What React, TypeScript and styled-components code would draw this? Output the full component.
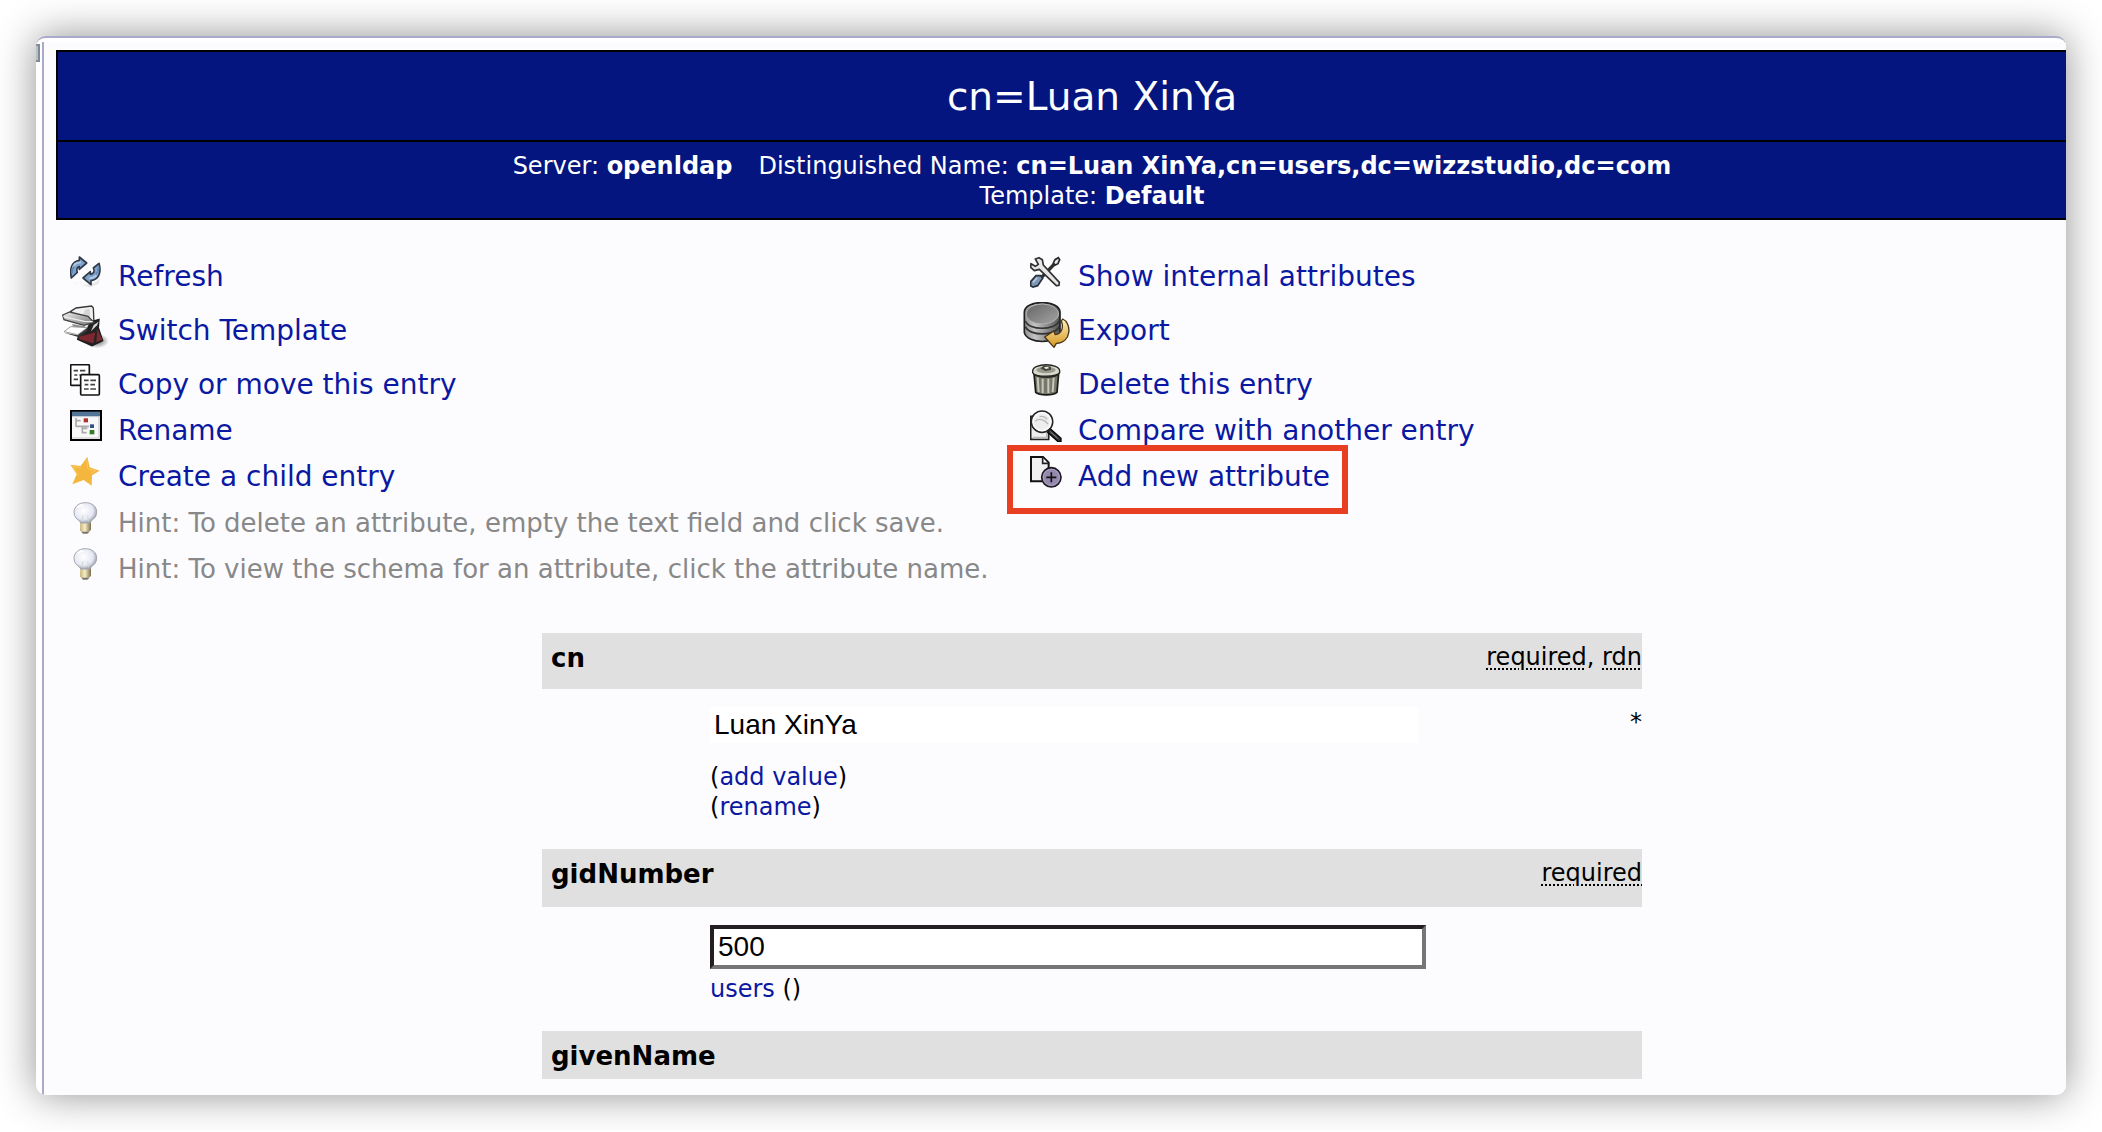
import React from "react";
import styled, { createGlobalStyle } from "styled-components";

const GlobalStyle = createGlobalStyle`
  *, *::before, *::after { box-sizing: border-box; }
  body {
    margin: 0;
    background: #ffffff;
    color: #000000;
    font-family: Verdana, "DejaVu Sans", sans-serif;
    font-size: 24px;
    line-height: 30px;
  }
`;

const Page = styled.div`
  padding: 36px;
`;

const Window = styled.div`
  display: flex;
  overflow: hidden;
  background: #ffffff;
  border-top: 2px solid #a9a9cb;
  border-radius: 10px;
  box-shadow: 0 0 40px rgba(0, 0, 0, 0.44);
`;

const TreeEdge = styled.aside`
  flex: none;
  width: 6px;
  padding-top: 6px;
`;

const TreeToggle = styled.div`
  width: 4px;
  height: 18px;
  border: solid #7f8c93;
  border-width: 2px 2px 2px 0;
  background: #b4c1c6;
`;

const Main = styled.main`
  flex: 1;
  min-width: 0;
  margin-top: 4px;
  padding: 8px 0 16px 12px;
  border-left: 2px solid #a9a9cb;
  background: #fcfcfe;
`;

/* The entry sheet is wider than the frame and is cut at its right edge. */
const Sheet = styled.div`
  width: calc(100% + 62px);
`;

const Banner = styled.header`
  border: 2px solid #000000;
  background: #041580;
  color: #ffffff;
  text-align: center;
`;

const Title = styled.h1`
  margin: 0;
  padding: 23px 0 21px;
  border-bottom: 2px solid #000000;
  font-size: 39px;
  font-weight: 400;
  line-height: 44px;
`;

const Subtitle = styled.p`
  margin: 0;
  padding: 9px 0 7px;
`;

const Gap = styled.span`
  margin-right: 26px;
`;

const Menu = styled.nav`
  display: grid;
  grid-template-columns: 960fr 1112fr;
  grid-auto-rows: minmax(46px, auto);
  margin: 35px 0 40px;
`;

const MenuItem = styled.div<{ $tall?: boolean; $wide?: boolean }>`
  display: grid;
  grid-template-columns: 60px auto;
  column-gap: 2px;
  justify-content: start;
  align-items: center;
  grid-column: ${(p) => (p.$wide ? "1 / -1" : "auto")};
  min-height: ${(p) => (p.$tall ? 62 : 46)}px;
  font-size: 28px;
  line-height: 34px;
  white-space: nowrap;
`;

const ItemText = styled.span`
  padding-bottom: 3px;
`;

const Marked = styled.div`
  position: relative;
  justify-self: start;

  &::after {
    content: "";
    position: absolute;
    inset: -10px -18px -13px -9px;
    border: 6px solid #e83f23;
    pointer-events: none;
  }
`;

const IconCell = styled.span`
  display: flex;
  justify-content: center;
  align-self: start;
  padding-top: 1px;
`;

const Icon = styled.svg<{ $size: number }>`
  display: block;
  width: ${(p) => p.$size}px;
  height: ${(p) => p.$size}px;
`;

const Link = styled.a`
  color: #0a18a2;
  text-decoration: none;
`;

const Hint = styled(ItemText)`
  color: #888888;
  font-size: 26px;
`;

const Attributes = styled.form`
  width: 1100px;
  max-width: 100%;
  margin: 0 auto;
`;

const AttrHead = styled.div<{ $height: number }>`
  display: flex;
  justify-content: space-between;
  min-height: ${(p) => p.$height}px;
  padding: 9px 0 0 9px;
  background: #e0e0e0;
`;

const AttrName = styled.label`
  padding-top: 1px;
  font-size: 26px;
  font-weight: 700;
`;

const Note = styled.abbr`
  text-decoration: underline dotted 2px;
  text-underline-offset: 3px;
`;

const AttrBody = styled.div`
  display: flex;
  justify-content: space-between;
  padding: 18px 0 27px 168px;
`;

const Values = styled.div<{ $gap: number }>`
  display: grid;
  row-gap: ${(p) => p.$gap}px;
`;

const TextBox = styled.input<{ $plain?: boolean }>`
  width: ${(p) => (p.$plain ? 708 : 716)}px;
  height: ${(p) => (p.$plain ? 36 : 44)}px;
  padding: 0 4px;
  border: ${(p) => (p.$plain ? "0" : "4px solid")};
  border-color: #231f20 #767676 #767676 #231f20;
  border-radius: 0;
  outline: none;
  background: #ffffff;
  color: #000000;
  font-family: Helvetica, "Liberation Sans", sans-serif;
  font-size: 28px;
`;

const RefreshIcon = () => (
  <Icon $size={32} viewBox="60 48 96 96" aria-hidden="true">
    <path d="M66 126C84 138 136 140 152 112L146 132L118 142Z" fill="#000" opacity=".08" />
    <g fill="#7fa3cc" stroke="#303a46" strokeWidth="5" strokeLinejoin="round">
      <path d="M64 114C58 84 66 64 88 61L88 51L110 69L88 88L88 80C80 82 79 90 82 97Z" />
      <path d="M147 70C155 98 146 119 123 122L123 134L99 114L121 95L121 103C132 101 135 94 130 84Z" />
    </g>
    <path d="M67 90C68 74 76 67 93 67M143 92C142 107 134 115 118 115" fill="none" stroke="#b3cbe5" strokeWidth="5" />
    <path d="M66 100C66 92 68 85 72 80M146 80C146 90 143 98 138 104" fill="none" stroke="#6388b5" strokeWidth="6" />
  </Icon>
);

const TemplateIcon = () => (
  <Icon $size={48} viewBox="36 186 144 144" aria-hidden="true">
    <defs>
      <linearGradient id="tray" x1="0" y1="0" x2="1" y2="1">
        <stop offset="0" stopColor="#eeeeee" />
        <stop offset="1" stopColor="#737373" />
      </linearGradient>
      <radialGradient id="trayShade">
        <stop offset="0" stopColor="#000" stopOpacity=".6" />
        <stop offset="1" stopColor="#000" stopOpacity="0" />
      </radialGradient>
    </defs>
    <ellipse cx="141" cy="303" rx="36" ry="22" fill="url(#trayShade)" />
    <path d="M62 214L78 204L125 198L130 204L132 252L100 250Z" fill="#f1f1f1" stroke="#383838" strokeWidth="4" />
    <path d="M105 209L119 206L121 231L99 224Z" fill="#d4d4d4" />
    <path d="M116 258L128 244L147 238L145 263L158 302L126 317L83 298L86 286L108 272Z" fill="#262223" stroke="#1d1b1b" strokeWidth="4" />
    <path d="M88 290L136 277L130 310L86 297Z" fill="#7e2731" />
    <path d="M142 266L157 299L139 307Z" fill="#7b2b32" />
    <path d="M131 255L146 245L141 256L123 274Z" fill="#d8d8d8" />
    <path d="M38 225L59 216L114 229L132 247L102 256L42 239Z" fill="url(#tray)" stroke="#424242" strokeWidth="4" />
    <path d="M40 230L103 244L128 245" stroke="#eee" strokeWidth="4" fill="none" />
    <path d="M66 252L104 259L112 264L70 262Z" fill="#8d8d8d" />
    <path d="M42 275L62 260L112 263L83 284Z" fill="#fff" stroke="#9b9b9b" strokeWidth="3" />
    <path d="M42 278L83 286L112 264L112 273L87 292Z" fill="#363636" />
  </Icon>
);

const CopyIcon = () => (
  <Icon $size={32} viewBox="60 372 96 96" aria-hidden="true">
    <g fill="#fff" stroke="#111" strokeWidth="5">
      <rect x="62" y="374" width="56" height="62" rx="3" />
      <rect x="92" y="404" width="56" height="61" rx="3" />
    </g>
    <path d="M71 392H84M90 392H106M73 405H82M88 405H90M71 418H84M102 421H116M121 421H138M104 434H115M121 434H135M102 447H116M121 447H138" stroke="#444" strokeWidth="5" />
  </Icon>
);

const RenameIcon = () => (
  <Icon $size={32} viewBox="60 408 96 96" transform="translate(0 0)" aria-hidden="true">
    <rect x="63" y="411" width="90" height="87" fill="#f8f8f8" stroke="#000" strokeWidth="6" />
    <rect x="66" y="413" width="84" height="14" fill="#527598" />
    <path d="M67 428H149" stroke="#c4cdd5" strokeWidth="3" />
    <path d="M78 432V458M78 440H92M78 457H117M97 457V476H110M97 463H112" fill="none" stroke="#aaa" strokeWidth="5" />
    <path d="M66 492H147V429" fill="none" stroke="#d7d7d7" strokeWidth="5" />
    <rect x="101" y="433" width="13" height="12" fill="#b1322e" />
    <rect x="120" y="451" width="12" height="11" fill="#32518b" />
    <rect x="119" y="468" width="14" height="13" fill="#337d28" />
  </Icon>
);

const StarIcon = () => (
  <Icon $size={32} viewBox="60 143 96 96" aria-hidden="true">
    <path d="M112 145L119 177L149 187L126 201L125 232L101 215L67 228L80 198L61 169L92 173Z" fill="#f4b63c" />
    <path d="M110 153L113 181L137 187L122 196M86 201L68 175L95 178" fill="none" stroke="#f9c961" strokeWidth="3" />
  </Icon>
);

const BulbIcon = () => (
  <Icon $size={32} viewBox="60 275 96 96" aria-hidden="true">
    <defs>
      <radialGradient id="glass" cx=".42" cy=".4" r=".65">
        <stop offset="0" stopColor="#fff" />
        <stop offset=".65" stopColor="#e6e7f3" />
        <stop offset="1" stopColor="#8a909d" />
      </radialGradient>
      <linearGradient id="socket">
        <stop offset="0" stopColor="#c7b479" />
        <stop offset=".45" stopColor="#f6edc9" />
        <stop offset="1" stopColor="#7c704a" />
      </linearGradient>
    </defs>
    <path d="M91 331H123V359L111 369H98L90 360Z" fill="url(#socket)" />
    <path d="M94 364H119L112 370H99Z" fill="#78766e" />
    <path d="M106 277C86 277 72 289 72 306C72 319 80 327 89 332L92 338H120L123 332C133 325 140 318 140 305C140 288 126 277 106 277Z" fill="url(#glass)" stroke="#a4a7af" strokeWidth="3" />
    <path d="M99 315L96 333M113 315L116 333" stroke="#cfdbd2" strokeWidth="3" />
    <path d="M83 291Q91 283 100 285" fill="none" stroke="#fff" strokeWidth="5" />
  </Icon>
);

const ToolsIcon = () => (
  <Icon $size={32} viewBox="90 49 96 96" aria-hidden="true">
    <path d="M166 70L122 116" stroke="#303030" strokeWidth="10" />
    <path d="M175 54L179 60L174 72L166 76L160 70L165 60Z" fill="#e9e9e9" stroke="#272727" strokeWidth="5" />
    <path d="M106 58L117 54L127 60L130 76L178 128L177 137L169 138L118 89L103 93L92 83L93 72L106 80L115 74Z" fill="#e6e6e6" stroke="#303030" strokeWidth="5" strokeLinejoin="round" />
    <path d="M92 126L108 108H122L128 116L113 138L99 142L92 139Z" fill="#8096b5" stroke="#28313c" strokeWidth="5" />
    <path d="M99 128L112 114" stroke="#b8c7db" strokeWidth="5" />
  </Icon>
);

const ExportIcon = () => (
  <Icon $size={48} viewBox="66 186 144 144" aria-hidden="true">
    <defs>
      <linearGradient id="drum">
        <stop offset="0" stopColor="#909090" />
        <stop offset=".3" stopColor="#c4c4c4" />
        <stop offset="1" stopColor="#515151" />
      </linearGradient>
      <linearGradient id="drumTop" x1="0" y1="0" x2="1" y2="1">
        <stop offset="0" stopColor="#656565" />
        <stop offset="1" stopColor="#a4a4a4" />
      </linearGradient>
      <linearGradient id="gold" x1="0" y1="0" x2="0" y2="1">
        <stop offset="0" stopColor="#fff0bc" />
        <stop offset="1" stopColor="#d5961d" />
      </linearGradient>
    </defs>
    <path d="M73 217C73 178 180 178 180 217V279C172 313 82 313 73 278Z" fill="url(#drum)" stroke="#202020" strokeWidth="5" />
    <ellipse cx="127" cy="222" rx="49" ry="30" fill="url(#drumTop)" stroke="#b0b0b0" strokeWidth="3" />
    <path d="M76 243C86 272 166 272 177 243M76 260C88 289 166 289 177 260" fill="none" stroke="#343434" strokeWidth="5" />
    <path d="M188 237C215 248 216 308 169 310L162 322L134 291L161 273L166 284C184 281 192 265 184 243Z" fill="url(#gold)" stroke="#49351a" strokeWidth="4" strokeLinejoin="round" />
  </Icon>
);

const TrashIcon = () => (
  <Icon $size={32} viewBox="90 372 96 96" aria-hidden="true">
    <path d="M102 401L107 457C119 467 159 467 171 457L176 401Z" fill="#77776b" stroke="#191916" strokeWidth="5" />
    <path d="M113 412L116 456M128 416V459M145 416V459M161 412L158 456" stroke="#c9c9bb" strokeWidth="6" />
    <path d="M104 402C120 414 160 414 175 402" fill="none" stroke="#2d2d27" strokeWidth="6" />
    <path d="M98 393C98 368 179 368 179 393V398C172 412 104 412 98 398Z" fill="#d7d7ca" stroke="#24241f" strokeWidth="4" />
    <ellipse cx="138" cy="390" rx="29" ry="10" fill="#9a9a8e" />
    <path d="M121 385L133 376L153 380V389L136 393Z" fill="#45453f" />
    <path d="M132 382L144 380L147 385L137 387Z" fill="#f0f0e5" />
  </Icon>
);

const CompareIcon = () => (
  <Icon $size={32} viewBox="90 29 96 96" aria-hidden="true">
    <path d="M92 48H131L146 78V117H92Z" fill="#efefef" stroke="#202020" strokeWidth="5" />
    <path d="M98 112H141V91L152 101" fill="none" stroke="#bababa" strokeWidth="6" />
    <path d="M149 84L183 114V123H173L143 96Z" fill="#353535" stroke="#050505" strokeWidth="4" />
    <path d="M151 94L173 114" stroke="#858585" strokeWidth="3" />
    <circle cx="126" cy="64" r="32" fill="#eee" stroke="#252525" strokeWidth="5" />
    <circle cx="126" cy="64" r="27" fill="none" stroke="#fff" strokeWidth="4" />
    <path d="M106 62C117 53 133 57 144 71M119 49Q132 45 142 57" fill="none" stroke="#b7b7b7" strokeWidth="4" />
  </Icon>
);

const AddIcon = () => (
  <Icon $size={32} viewBox="90 168 96 96" aria-hidden="true">
    <path d="M93 171H129L146 188V244H93Z" fill="#f0f0f0" stroke="#111" strokeWidth="6" />
    <path d="M128 173V190H144" fill="#fff" stroke="#222" strokeWidth="5" />
    <circle cx="154" cy="232" r="29" fill="#9588ae" stroke="#1c1922" strokeWidth="5" />
    <circle cx="154" cy="232" r="24" fill="none" stroke="#aca1c0" strokeWidth="3" />
    <path d="M154 217V247M139 232H169" stroke="#111" strokeWidth="5" />
  </Icon>
);

type Action = { icon: React.ReactNode; text: string; tall?: boolean; marked?: boolean };

const actions: Action[] = [
  { icon: <RefreshIcon />, text: "Refresh" },
  { icon: <ToolsIcon />, text: "Show internal attributes" },
  { icon: <TemplateIcon />, text: "Switch Template", tall: true },
  { icon: <ExportIcon />, text: "Export", tall: true },
  { icon: <CopyIcon />, text: "Copy or move this entry" },
  { icon: <TrashIcon />, text: "Delete this entry" },
  { icon: <RenameIcon />, text: "Rename" },
  { icon: <CompareIcon />, text: "Compare with another entry" },
  { icon: <StarIcon />, text: "Create a child entry" },
  { icon: <AddIcon />, text: "Add new attribute", marked: true },
];

const hints = [
  "Hint: To delete an attribute, empty the text field and click save.",
  "Hint: To view the schema for an attribute, click the attribute name.",
];

const MenuAction = ({ icon, text, tall, marked }: Action) => {
  const item = (
    <MenuItem $tall={tall}>
      <IconCell>{icon}</IconCell>
      <ItemText>
        <Link href="#">{text}</Link>
      </ItemText>
    </MenuItem>
  );
  return marked ? <Marked>{item}</Marked> : item;
};

export default function App() {
  return (
    <Page>
      <GlobalStyle />
      <Window>
        <TreeEdge>
          <TreeToggle />
        </TreeEdge>
        <Main>
          <Sheet>
            <Banner>
              <Title>cn=Luan XinYa</Title>
              <Subtitle>
                Server: <b>openldap</b>
                <Gap />
                Distinguished Name: <b>cn=Luan XinYa,cn=users,dc=wizzstudio,dc=com</b>
                <br />
                Template: <b>Default</b>
              </Subtitle>
            </Banner>

            <Menu>
              {actions.map((action) => (
                <MenuAction key={action.text} {...action} />
              ))}
              {hints.map((hint) => (
                <MenuItem key={hint} $wide>
                  <IconCell>
                    <BulbIcon />
                  </IconCell>
                  <Hint>{hint}</Hint>
                </MenuItem>
              ))}
            </Menu>

            <Attributes>
              <AttrHead $height={56}>
                <AttrName htmlFor="cn">cn</AttrName>
                <span>
                  <Note>required</Note>, <Note>rdn</Note>
                </span>
              </AttrHead>
              <AttrBody>
                <Values $gap={19}>
                  <TextBox id="cn" $plain readOnly defaultValue="Luan XinYa" />
                  <div>
                    (<Link href="#">add value</Link>)
                    <br />
                    (<Link href="#">rename</Link>)
                  </div>
                </Values>
                <span>*</span>
              </AttrBody>

              <AttrHead $height={58}>
                <AttrName htmlFor="gidNumber">gidNumber</AttrName>
                <Note>required</Note>
              </AttrHead>
              <AttrBody>
                <Values $gap={5}>
                  <TextBox id="gidNumber" defaultValue="500" />
                  <div>
                    <Link href="#">users</Link> ()
                  </div>
                </Values>
              </AttrBody>

              <AttrHead $height={48}>
                <AttrName as="span">givenName</AttrName>
              </AttrHead>
            </Attributes>
          </Sheet>
        </Main>
      </Window>
    </Page>
  );
}
